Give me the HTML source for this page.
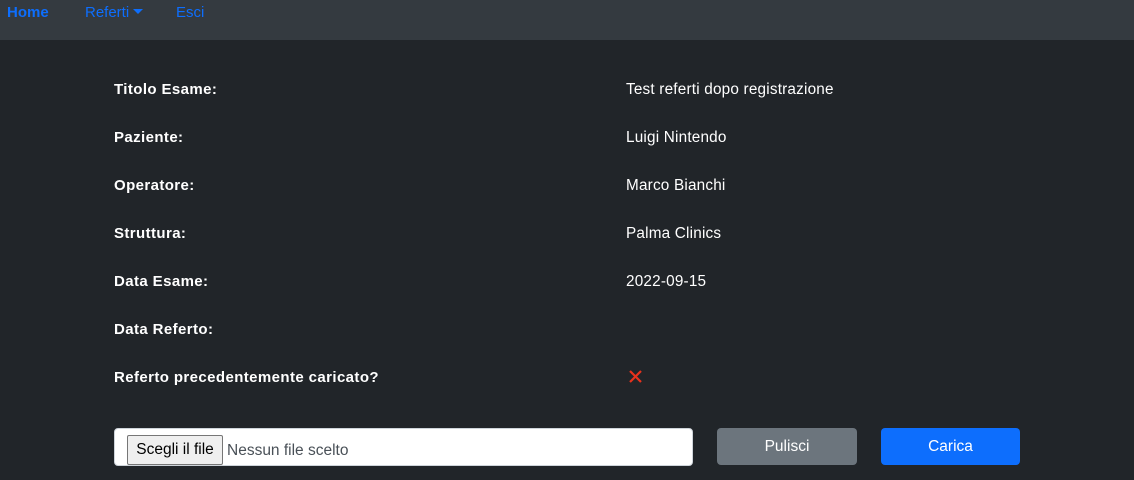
<!DOCTYPE html>
<html><head><style>
body{margin:0;width:1134px;height:480px;background:#212529;font-family:"Liberation Sans",sans-serif;font-size:15px;color:#fff;overflow:hidden;position:relative}
.nav{position:absolute;left:0;top:0;width:1134px;height:40px;background:#343a40}
.nav span{position:absolute;top:4px;color:#0d6efd;font-size:15px}
.l{position:absolute;left:114px;font-weight:bold;font-size:15px;letter-spacing:0.4px}
.v{position:absolute;left:626px;font-size:15.3px;letter-spacing:0.2px}
.file{position:absolute;left:114px;top:428px;width:579px;height:38px;background:#fff;border:1px solid #ced4da;border-radius:4px;box-sizing:border-box}
.fb{position:absolute;left:12px;top:6px;width:96px;height:30px;background:#efefef;border:1px solid #767676;border-radius:2px;box-sizing:border-box;color:#000;font-size:15.5px;line-height:28px;text-align:center}
.ft{position:absolute;left:112px;top:13px;color:#495057;font-size:15.5px}
.btn{position:absolute;top:428px;height:37px;border-radius:4px;line-height:38px;text-align:center;font-size:15.5px;color:#fff}
</style></head><body>
<div class="nav">
<span style="left:7px;font-weight:bold">Home</span>
<span style="left:85px">Referti <span style="position:static;display:inline-block;width:0;height:0;border-left:5px solid transparent;border-right:5px solid transparent;border-top:5px solid #0d6efd;vertical-align:3px"></span></span>
<span style="left:176px">Esci</span>
</div>
<div class="l" style="top:81px">Titolo Esame:</div><div class="v" style="top:81px">Test referti dopo registrazione</div>
<div class="l" style="top:129px">Paziente:</div><div class="v" style="top:129px">Luigi Nintendo</div>
<div class="l" style="top:177px">Operatore:</div><div class="v" style="top:177px">Marco Bianchi</div>
<div class="l" style="top:225px">Struttura:</div><div class="v" style="top:225px">Palma Clinics</div>
<div class="l" style="top:273px">Data Esame:</div><div class="v" style="top:273px">2022-09-15</div>
<div class="l" style="top:321px">Data Referto:</div>
<div class="l" style="top:369px">Referto precedentemente caricato?</div>
<svg style="position:absolute;left:628px;top:369px" width="15" height="15"><path d="M2 2L13 13M13 2L2 13" stroke="#e8321c" stroke-width="2.2"/></svg>
<div class="file"><div class="fb">Scegli il file</div><div class="ft">Nessun file scelto</div></div>
<div class="btn" style="left:717px;width:140px;background:#6c757d">Pulisci</div>
<div class="btn" style="left:881px;width:139px;background:#0d6efd">Carica</div>
</body></html>
